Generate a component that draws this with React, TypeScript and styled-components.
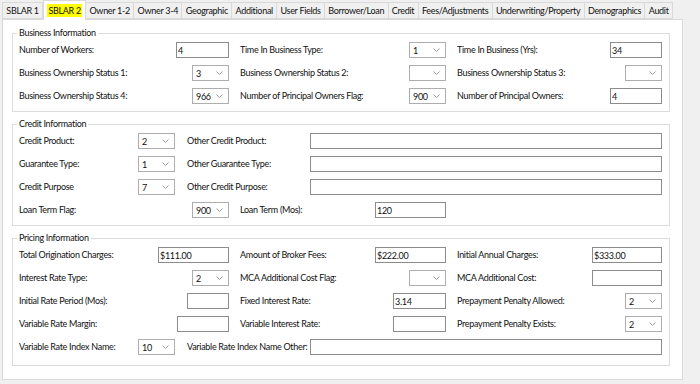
import React from 'react';
import styled, { createGlobalStyle } from 'styled-components';

const Global = createGlobalStyle`
  html, body { margin: 0; padding: 0; background: #f0f0f0; }
  body { font-family: Lato, "Noto Sans", sans-serif; font-size: 9px; letter-spacing: -0.3px; color: #111; }
  * { box-sizing: border-box; }
`;

const Page = styled.div`
  width: 700px;
  height: 384px;
  background: #f0f0f0;
  padding: 0 0 0 2px;
  display: flex;
  flex-direction: column;
`;

const TabStrip = styled.div`
  display: flex;
  align-items: flex-end;
  height: 19px;
  position: relative;
  z-index: 1;
`;

const Tab = styled.div<{ $active?: boolean }>`
  height: ${(p) => (p.$active ? '20px' : '17px')};
  margin-bottom: ${(p) => (p.$active ? '-1px' : '0')};
  padding: 0 3.3px;
  display: flex;
  align-items: center;
  border: 1px solid #d9d9d9;
  border-bottom: ${(p) => (p.$active ? 'none' : '1px solid #d9d9d9')};
  border-left: ${(p) => (p.$active ? '1px solid #d9d9d9' : 'none')};
  background: ${(p) => (p.$active ? '#fff' : '#f0f0f0')};
  white-space: nowrap;
  font-size: 9px;
  &:first-child { border-left: 1px solid #d9d9d9; }
`;

const Highlight = styled.span`
  background: #ffff00;
  padding: 1px 1px;
`;

const Panel = styled.div`
  width: 681px;
  height: 361px;
  background: #fff;
  border: 1px solid #d9d9d9;
  padding: 7px 12px 0 9px;
`;

const Group = styled.fieldset<{ $bottom?: number }>`
  margin: 0 0 6px 0;
  border: 1px solid #dcdcdc;
  padding: 3px 7px ${(p) => p.$bottom ?? 7}px 6px;
  min-width: 0;
  display: flex;
  flex-direction: column;
  gap: 7px;
`;

const Legend = styled.legend`
  padding: 0 2px;
  margin-left: -2px;
  line-height: 12px;
  font-size: 9px;
`;

const TripleRow = styled.div`
  display: grid;
  grid-template-columns: 210px 206px 205px;
  column-gap: 11px;
  height: 16px;
`;

const WideRow = styled.div`
  display: grid;
  grid-template-columns: 156px 1fr;
  column-gap: 12px;
  height: 16px;
`;

const Field = styled.div`
  display: flex;
  align-items: center;
  justify-content: space-between;
  min-width: 0;
`;

const Label = styled.span<{ $w?: number }>`
  white-space: nowrap;
  flex: 0 0 auto;
  min-width: ${(p) => (p.$w ? `${p.$w}px` : '0')};
  line-height: 12px;
`;

const TextBox = styled.input<{ $w?: number }>`
  width: ${(p) => (p.$w ? `${p.$w}px` : 'auto')};
  flex: ${(p) => (p.$w ? '0 0 auto' : '1 1 auto')};
  min-width: 0;
  height: 16px;
  border: 1px solid #8c8c8c;
  background: #fff;
  font: inherit;
  font-size: 9px;
  letter-spacing: -0.3px;
  color: #111;
  padding: 0 1px;
  margin: 0;
  outline: none;
`;

const Combo = styled.div`
  width: 37px;
  height: 16px;
  flex: 0 0 auto;
  border: 1px solid #adadad;
  background: #fff;
  display: flex;
  align-items: center;
  justify-content: space-between;
  padding: 0 5px 0 3px;
`;

const Chevron = () => (
  <svg width="7" height="4" viewBox="0 0 7 4">
    <polyline points="0.5,0.5 3.5,3.5 6.5,0.5" fill="none" stroke="#9a9a9a" strokeWidth="1" />
  </svg>
);

type Ctl = { label: string; kind: 'text' | 'combo'; v?: string; w?: number };

const Control = ({ c }: { c: Ctl }) =>
  c.kind === 'combo' ? (
    <Combo>
      <span>{c.v ?? ''}</span>
      <Chevron />
    </Combo>
  ) : (
    <TextBox $w={c.w} value={c.v ?? ''} readOnly />
  );

const Triple = ({ cells }: { cells: Ctl[] }) => (
  <TripleRow>
    {cells.map((c) => (
      <Field key={c.label}>
        <Label>{c.label}</Label>
        <Control c={c} />
      </Field>
    ))}
  </TripleRow>
);

const Wide = ({ a, b }: { a: Ctl; b: Ctl }) => (
  <WideRow>
    <Field>
      <Label>{a.label}</Label>
      <Control c={a} />
    </Field>
    <Field>
      <Label $w={123}>{b.label}</Label>
      <Control c={b} />
    </Field>
  </WideRow>
);

const tabs = [
  'SBLAR 1',
  'SBLAR 2',
  'Owner 1-2',
  'Owner 3-4',
  'Geographic',
  'Additional',
  'User Fields',
  'Borrower/Loan',
  'Credit',
  'Fees/Adjustments',
  'Underwriting/Property',
  'Demographics',
  'Audit',
];

const business: Ctl[][] = [
  [
    { label: 'Number of Workers:', kind: 'text', v: '4', w: 53 },
    { label: 'Time In Business Type:', kind: 'combo', v: '1' },
    { label: 'Time In Business (Yrs):', kind: 'text', v: '34', w: 52 },
  ],
  [
    { label: 'Business Ownership Status 1:', kind: 'combo', v: '3' },
    { label: 'Business Ownership Status 2:', kind: 'combo' },
    { label: 'Business Ownership Status 3:', kind: 'combo' },
  ],
  [
    { label: 'Business Ownership Status 4:', kind: 'combo', v: '966' },
    { label: 'Number of Principal Owners Flag:', kind: 'combo', v: '900' },
    { label: 'Number of Principal Owners:', kind: 'text', v: '4', w: 52 },
  ],
];

const credit: [Ctl, Ctl][] = [
  [
    { label: 'Credit Product:', kind: 'combo', v: '2' },
    { label: 'Other Credit Product:', kind: 'text' },
  ],
  [
    { label: 'Guarantee Type:', kind: 'combo', v: '1' },
    { label: 'Other Guarantee Type:', kind: 'text' },
  ],
  [
    { label: 'Credit Purpose', kind: 'combo', v: '7' },
    { label: 'Other Credit Purpose:', kind: 'text' },
  ],
];

const pricing: Ctl[][] = [
  [
    { label: 'Total Origination Charges:', kind: 'text', v: '$111.00', w: 71 },
    { label: 'Amount of Broker Fees:', kind: 'text', v: '$222.00', w: 71 },
    { label: 'Initial Annual Charges:', kind: 'text', v: '$333.00', w: 70 },
  ],
  [
    { label: 'Interest Rate Type:', kind: 'combo', v: '2' },
    { label: 'MCA Additional Cost Flag:', kind: 'combo' },
    { label: 'MCA Additional Cost:', kind: 'text', w: 70 },
  ],
  [
    { label: 'Initial Rate Period (Mos):', kind: 'text', w: 42 },
    { label: 'Fixed Interest Rate:', kind: 'text', v: '3.14', w: 53 },
    { label: 'Prepayment Penalty Allowed:', kind: 'combo', v: '2' },
  ],
  [
    { label: 'Variable Rate Margin:', kind: 'text', w: 52 },
    { label: 'Variable Interest Rate:', kind: 'text', w: 53 },
    { label: 'Prepayment Penalty Exists:', kind: 'combo', v: '2' },
  ],
];

export default function App() {
  return (
    <>
      <Global />
      <Page>
        <TabStrip>
          {tabs.map((t) => (
            <Tab key={t} $active={t === 'SBLAR 2'}>
              {t === 'SBLAR 2' ? <Highlight>{t}</Highlight> : t}
            </Tab>
          ))}
        </TabStrip>
        <Panel>
          <Group>
            <Legend>Business Information</Legend>
            {business.map((r, i) => (
              <Triple key={i} cells={r} />
            ))}
          </Group>
          <Group>
            <Legend>Credit Information</Legend>
            {credit.map(([a, b]) => (
              <Wide key={a.label} a={a} b={b} />
            ))}
            <Triple
              cells={[
                { label: 'Loan Term Flag:', kind: 'combo', v: '900' },
                { label: 'Loan Term (Mos):', kind: 'text', v: '120', w: 71 },
              ]}
            />
          </Group>
          <Group $bottom={10}>
            <Legend>Pricing Information</Legend>
            {pricing.map((r, i) => (
              <Triple key={i} cells={r} />
            ))}
            <Wide
              a={{ label: 'Variable Rate Index Name:', kind: 'combo', v: '10' }}
              b={{ label: 'Variable Rate Index Name Other:', kind: 'text' }}
            />
          </Group>
        </Panel>
      </Page>
    </>
  );
}
